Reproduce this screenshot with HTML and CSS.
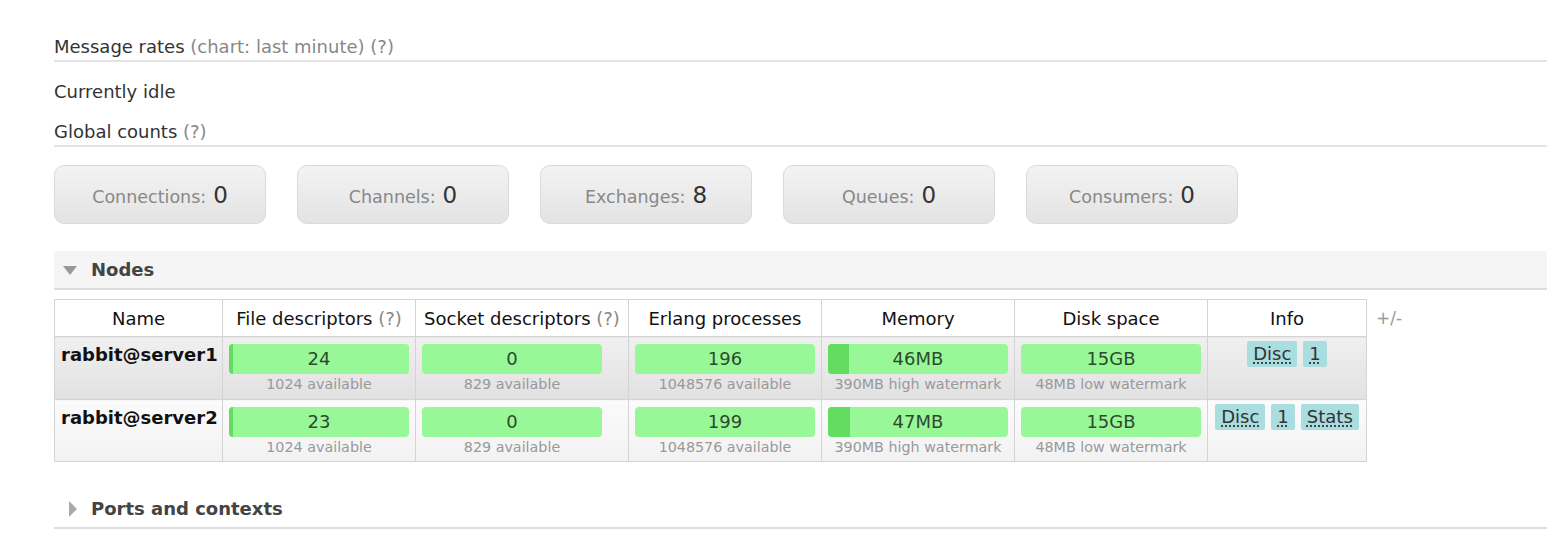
FILE: index.html
```html
<!DOCTYPE html>
<html>
<head>
<meta charset="utf-8">
<link rel="stylesheet" href="styles.css">
</head>
<body>
<div class="main">
  <h2 class="title">Message rates <span class="help">(chart: last minute) (?)</span></h2>
  <p class="idle">Currently idle</p>
  <h2 class="title">Global counts <span class="help">(?)</span></h2>
  <div class="counts">
    <div class="count"><span class="lbl">Connections:</span><span class="num">0</span></div>
    <div class="count"><span class="lbl">Channels:</span><span class="num">0</span></div>
    <div class="count"><span class="lbl">Exchanges:</span><span class="num">8</span></div>
    <div class="count"><span class="lbl">Queues:</span><span class="num">0</span></div>
    <div class="count"><span class="lbl">Consumers:</span><span class="num">0</span></div>
  </div>

  <div class="sec-head open"><span class="tri-down"></span>Nodes</div>
  <div class="nodes">
    <table class="grid">
      <colgroup>
        <col class="c-name"><col class="c-fd"><col class="c-sd"><col class="c-ep"><col class="c-mem"><col class="c-disk"><col class="c-info">
      </colgroup>
      <thead>
        <tr>
          <th>Name</th>
          <th>File descriptors <span class="help">(?)</span></th>
          <th>Socket descriptors <span class="help">(?)</span></th>
          <th>Erlang processes</th>
          <th>Memory</th>
          <th>Disk space</th>
          <th>Info</th>
        </tr>
      </thead>
      <tbody>
        <tr class="alt1">
          <td class="name">rabbit@server1</td>
          <td><div class="meter"><div class="bar"><div class="fill" style="width:2.3%"></div><span class="val">24</span></div><div class="sub">1024 available</div></div></td>
          <td><div class="meter"><div class="bar"><span class="val">0</span></div><div class="sub">829 available</div></div></td>
          <td><div class="meter"><div class="bar"><span class="val">196</span></div><div class="sub">1048576 available</div></div></td>
          <td><div class="meter"><div class="bar"><div class="fill" style="width:11.8%"></div><span class="val">46MB</span></div><div class="sub">390MB high watermark</div></div></td>
          <td><div class="meter"><div class="bar"><span class="val">15GB</span></div><div class="sub">48MB low watermark</div></div></td>
          <td class="info"><span class="badge"><span class="ab">Disc</span></span><span class="badge"><span class="ab">1</span></span></td>
        </tr>
        <tr class="alt2">
          <td class="name">rabbit@server2</td>
          <td><div class="meter"><div class="bar"><div class="fill" style="width:2.2%"></div><span class="val">23</span></div><div class="sub">1024 available</div></div></td>
          <td><div class="meter"><div class="bar"><span class="val">0</span></div><div class="sub">829 available</div></div></td>
          <td><div class="meter"><div class="bar"><span class="val">199</span></div><div class="sub">1048576 available</div></div></td>
          <td><div class="meter"><div class="bar"><div class="fill" style="width:12%"></div><span class="val">47MB</span></div><div class="sub">390MB high watermark</div></div></td>
          <td><div class="meter"><div class="bar"><span class="val">15GB</span></div><div class="sub">48MB low watermark</div></div></td>
          <td class="info"><span class="badge"><span class="ab">Disc</span></span><span class="badge"><span class="ab">1</span></span><span class="badge"><span class="ab">Stats</span></span></td>
        </tr>
      </tbody>
    </table>
    <span class="pm">+/-</span>
  </div>

  <div class="sec-head closed"><span class="tri-right"></span>Ports and contexts</div>
</div>
</body>
</html>
```

FILE: styles.css
```css
html, body {
  margin: 0;
  padding: 0;
  background: #fff;
}
body {
  font-family: "DejaVu Sans", Verdana, sans-serif;
  font-size: 18px;
  color: #333;
  overflow: hidden;
}
.main {
  padding: 36px 0 0 54px;
}
.title {
  margin: 0;
  font-size: 18px;
  font-weight: normal;
  line-height: 22px;
  padding-bottom: 2px;
  border-bottom: 2px solid #e4e4e4;
  color: #333;
}
.help {
  color: #888;
}
.idle {
  margin: 19px 0 18px 0;
  line-height: 22px;
}
.counts {
  display: flex;
  gap: 31px;
  margin-top: 18px;
}
.count {
  box-sizing: border-box;
  width: 212px;
  height: 59px;
  border: 1px solid #dadada;
  border-radius: 10px;
  background: linear-gradient(#f3f3f3, #e3e3e3);
  display: flex;
  align-items: baseline;
  justify-content: center;
  padding-top: 16px;
  gap: 7px;
}
.count .lbl {
  font-size: 17.5px;
  color: #888;
}
.count .num {
  font-size: 23px;
  color: #333;
}
.sec-head {
  height: 37px;
  line-height: 37px;
  border-bottom: 2px solid #ddd;
  font-weight: bold;
  font-size: 18px;
  color: #444;
  display: flex;
  align-items: center;
  padding-left: 9px;
}
.sec-head.open {
  margin-top: 27px;
  background: #f5f5f5;
}
.sec-head.closed {
  margin-top: 28px;
  padding-left: 15px;
}
.tri-down {
  width: 0;
  height: 0;
  border-left: 7px solid transparent;
  border-right: 7px solid transparent;
  border-top: 9px solid #999;
  margin-right: 14px;
  margin-top: 1px;
}
.tri-right {
  width: 0;
  height: 0;
  border-top: 8px solid transparent;
  border-bottom: 8px solid transparent;
  border-left: 8px solid #aaa;
  margin-right: 14px;
}
.nodes {
  display: flex;
  align-items: flex-start;
  margin-top: 9px;
}
.grid {
  border-collapse: collapse;
  table-layout: fixed;
  width: 1312px;
}
.c-name { width: 168px; }
.c-fd { width: 193px; }
.c-sd { width: 213px; }
.c-ep { width: 193px; }
.c-mem { width: 193px; }
.c-disk { width: 193px; }
.c-info { width: 159px; }
.grid th, .grid td {
  border: 1px solid #d4d4d4;
}
.grid th {
  height: 36px;
  padding: 0;
  font-weight: normal;
  font-size: 18px;
  color: #111;
  text-align: center;
  background: #fff;
  white-space: nowrap;
}
.grid td {
  vertical-align: top;
  padding: 7px 0 0 6px;
}
.alt1 td {
  height: 55px;
  background: linear-gradient(#f0f0f0, #e1e1e1);
}
.alt2 td {
  height: 54px;
  background: linear-gradient(#fbfbfb, #f2f2f2);
}
.grid td.name {
  font-weight: bold;
  color: #111;
  line-height: 22px;
  white-space: nowrap;
}
.meter {
  width: 180px;
  text-align: center;
}
.bar {
  position: relative;
  height: 30px;
  line-height: 30px;
  background: #98f898;
  border-radius: 4px;
  overflow: hidden;
  color: #2e4a2e;
}
.fill {
  position: absolute;
  left: 0;
  top: 0;
  bottom: 0;
  background: #62dd62;
}
.val {
  position: relative;
}
.sub {
  font-size: 14.3px;
  line-height: 20px;
  color: #999;
}
.grid td.info {
  text-align: center;
  padding: 4px 0 0 0;
  white-space: nowrap;
}
.badge {
  display: inline-block;
  background: #a9dde0;
  border-radius: 2px;
  height: 26px;
  line-height: 26px;
  padding: 0 6px;
  margin: 0 3px;
  color: #333;
}
.ab {
  text-decoration: underline dotted;
  text-underline-offset: 3px;
}
.pm {
  color: #999;
  font-size: 17px;
  margin: 9px 0 0 9px;
}
```
